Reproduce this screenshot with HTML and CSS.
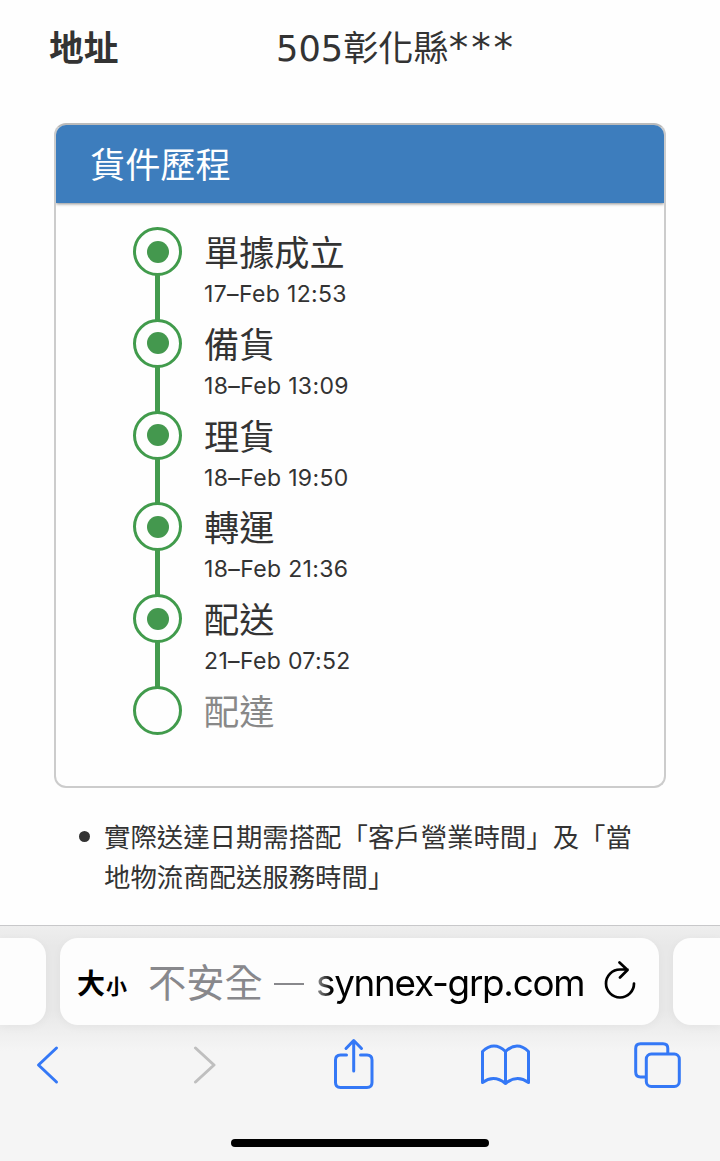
FILE: index.html
```html
<!DOCTYPE html>
<html lang="zh-Hant">
<head>
<meta charset="utf-8">
<meta name="viewport" content="width=device-width">
<title>貨件歷程</title>
<link rel="stylesheet" href="styles.css">
</head>
<body>
<main class="page">
  <div class="address">
    <div class="address-label">地址</div>
    <div class="address-value">505彰化縣<span class="mask">***</span></div>
  </div>
  <section class="card">
    <h1 class="card-title">貨件歷程</h1>
    <ol class="steps">
      <li class="step"><span class="dot done"></span><div><div class="name">單據成立</div><div class="time">17–Feb 12:53</div></div></li>
      <li class="step"><span class="dot done"></span><div><div class="name">備貨</div><div class="time">18–Feb 13:09</div></div></li>
      <li class="step"><span class="dot done"></span><div><div class="name">理貨</div><div class="time">18–Feb 19:50</div></div></li>
      <li class="step"><span class="dot done"></span><div><div class="name">轉運</div><div class="time">18–Feb 21:36</div></div></li>
      <li class="step"><span class="dot done"></span><div><div class="name">配送</div><div class="time">21–Feb 07:52</div></div></li>
      <li class="step"><span class="dot"></span><div><div class="name pending">配達</div></div></li>
    </ol>
  </section>
  <ul class="notes"><li class="note">實際送達日期需搭配「客戶營業時間」及「當<br>地物流商配送服務時間」</li></ul>
</main>
<footer class="browser">
  <div class="tabs">
    <div class="tab tab-side"></div>
    <div class="tab tab-main">
      <span class="size-big">大</span><span class="size-small">小</span>
      <span class="insecure">不安全</span><span class="dash"></span>
      <span class="host">synnex-grp.com</span>
      <svg class="reload" width="34" height="40" viewBox="0 0 34 40" fill="none" stroke="#000" stroke-width="2.7" stroke-linecap="round" stroke-linejoin="round"><path d="M31 22.500A14 14 0 1 1 17 8.500H24.500M16.500 1.500L24.500 9L17 16.500"/></svg>
    </div>
    <div class="tab tab-side"></div>
  </div>
  <nav class="tools">
    <svg class="back" width="24" height="40" viewBox="0 0 24 40"><path d="M21.500 3L3.500 20L21.500 37"/></svg>
    <svg class="forward" width="24" height="40" viewBox="0 0 24 40"><path d="M3.500 3L22 20L3.500 37"/></svg>
    <svg class="share" width="42" height="52" viewBox="0 0 42 52"><path d="M14.500 17H8.500Q3.500 17 3.500 22V44.500Q3.500 49.500 8.500 49.500H35Q40 49.500 40 44.500V22Q40 17 35 17H28.500M21.700 33V3M14 10.500L21.700 2.500L29.500 10.500"/></svg>
    <svg class="book" width="52" height="44" viewBox="0 0 52 44"><path d="M26.500 8.500Q15-2.500 3.500 8.500V39.500Q15 31 26.500 40.500Q38 31 49.500 39.500V8.500Q38-2.500 26.500 8.500V40.500"/></svg>
    <svg class="windows" width="48" height="48" viewBox="0 0 48 48"><path d="M12.500 36H7.500Q2.700 36 2.700 31V7.500Q2.700 2.700 7.500 2.700H30Q34.800 2.700 34.800 7.500V12.500"/><rect x="13.300" y="13" width="33" height="32.500" rx="5"/></svg>
  </nav>
  <div class="home"></div>
</footer>
</body>
</html>
```
FILE: styles.css
```css
* { box-sizing: border-box; }
body {
  margin: 0;
  height: 1161px;
  overflow: hidden;
  background: #fefefe;
  color: #333;
  font-family: "DejaVu Sans", "Noto Sans CJK TC", sans-serif;
}
.page { height: 925px; overflow: hidden; }
.address {
  display: flex;
  height: 123px;
  padding: 20px 0 0 49px;
  font-size: 34.700px;
  line-height: 52px;
}
.address-label { width: 227px; font-weight: 700; font-family: "Noto Sans CJK TC", sans-serif; }
.address-value { padding-top: 3px; font-size: 35.200px; white-space: nowrap; }
.mask { font-size: 39px; letter-spacing: 2.900px; line-height: 1; }
.card {
  width: 612px;
  height: 665px;
  margin-left: 54px;
  border: 2px solid #ccc;
  border-top-color: #bbb;
  border-radius: 12px;
  overflow: hidden;
}
.card-title {
  height: 78px;
  margin: 0;
  padding-left: 34px;
  background: #3d7dbd;
  color: #fff;
  font: 400 35.200px/75px "Noto Sans CJK TC", sans-serif;
  box-shadow: 0 1px 3px rgba(0,0,0,.45);
}
.steps { margin: 0; padding: 24px 0 0 77px; list-style: none; }
.step { position: relative; display: flex; height: 91.800px; gap: 22px; }
.step:not(:last-child)::before {
  content: "";
  position: absolute;
  left: 22px;
  top: 46px;
  width: 5px;
  height: 48px;
  background: #449b4e;
}
.dot {
  display: grid;
  place-items: center;
  width: 49px;
  height: 49px;
  border: 3px solid #419b4c;
  border-radius: 50%;
  flex: none;
}
.done::after { content: ""; width: 22px; height: 22px; border-radius: 50%; background: #44984e; }
.name { height: 50px; font: 35.200px/47px "Noto Sans CJK TC", sans-serif; }
.pending { color: #888; }
.time { font: 23px/35px Inter, sans-serif; letter-spacing: .35px; white-space: nowrap; }
.notes { display: flex; gap: 14px; margin: 28px 0 0; padding: 0 0 0 79px; list-style: none; }
.notes::before { content: ""; width: 11px; height: 11px; margin-top: 15px; border-radius: 50%; background: #333; }
.note { font: 26.400px/40px "Noto Sans CJK TC", sans-serif; white-space: nowrap; }
.browser {
  height: 236px;
  border-top: 1px solid #c8c8ca;
  background: linear-gradient(#eee 0, #e8e8e8 20px, #e8e8e8 85px, #f5f5f5 125px);
}
.tabs { display: flex; gap: 14px; padding-top: 12px; height: 100px; }
.tab { height: 87px; background: #fdfdfd; box-shadow: 0 2px 10px rgba(0,0,0,.04); }
.tab-side { width: 46px; border-radius: 0 18px 18px 0; }
.tab-side:last-child { width: 47px; border-radius: 18px 0 0 18px; }
.tab-main { display: flex; align-items: center; width: 599px; border-radius: 18px; padding-left: 17px; color: #000; font-family: "Noto Sans CJK TC", sans-serif; white-space: nowrap; }
.size-big { font-size: 28px; font-weight: 700; width: 28px; }
.size-small { font-size: 21px; font-weight: 700; width: 43px; padding-top: 6px; padding-left: 1px; }
.insecure { width: 126px; margin-top: -3px; font-size: 38.300px; color: #88888c; }
.dash { width: 30px; height: 2px; margin-top: 4px; background: #88888c; }
.host {
  flex: none;
  width: 299px;
  padding: 3px 0 0 12px;
  font: 36.800px/50px Inter, sans-serif;
  letter-spacing: -1.260px;
  background: linear-gradient(90deg, #999 12px, #000 28px);
  background-clip: text;
  -webkit-background-clip: text;
  color: transparent;
}
.reload { flex: none; margin-top: -1px; }
.tools { display: flex; align-items: center; height: 78px; }
.tools svg { flex: none; fill: none; stroke: #3478f6; stroke-width: 3; stroke-linecap: round; stroke-linejoin: round; }
.back { margin-left: 35px; }
.tools .forward { margin-left: 133px; stroke: #bfbfbf; }
.share { margin: -2px 0 0 116px; }
.book { margin-left: 105px; }
.windows { margin-left: 102px; }
.home { width: 258px; height: 8px; margin: 35px auto 0; border-radius: 4px; background: #000; }
```
